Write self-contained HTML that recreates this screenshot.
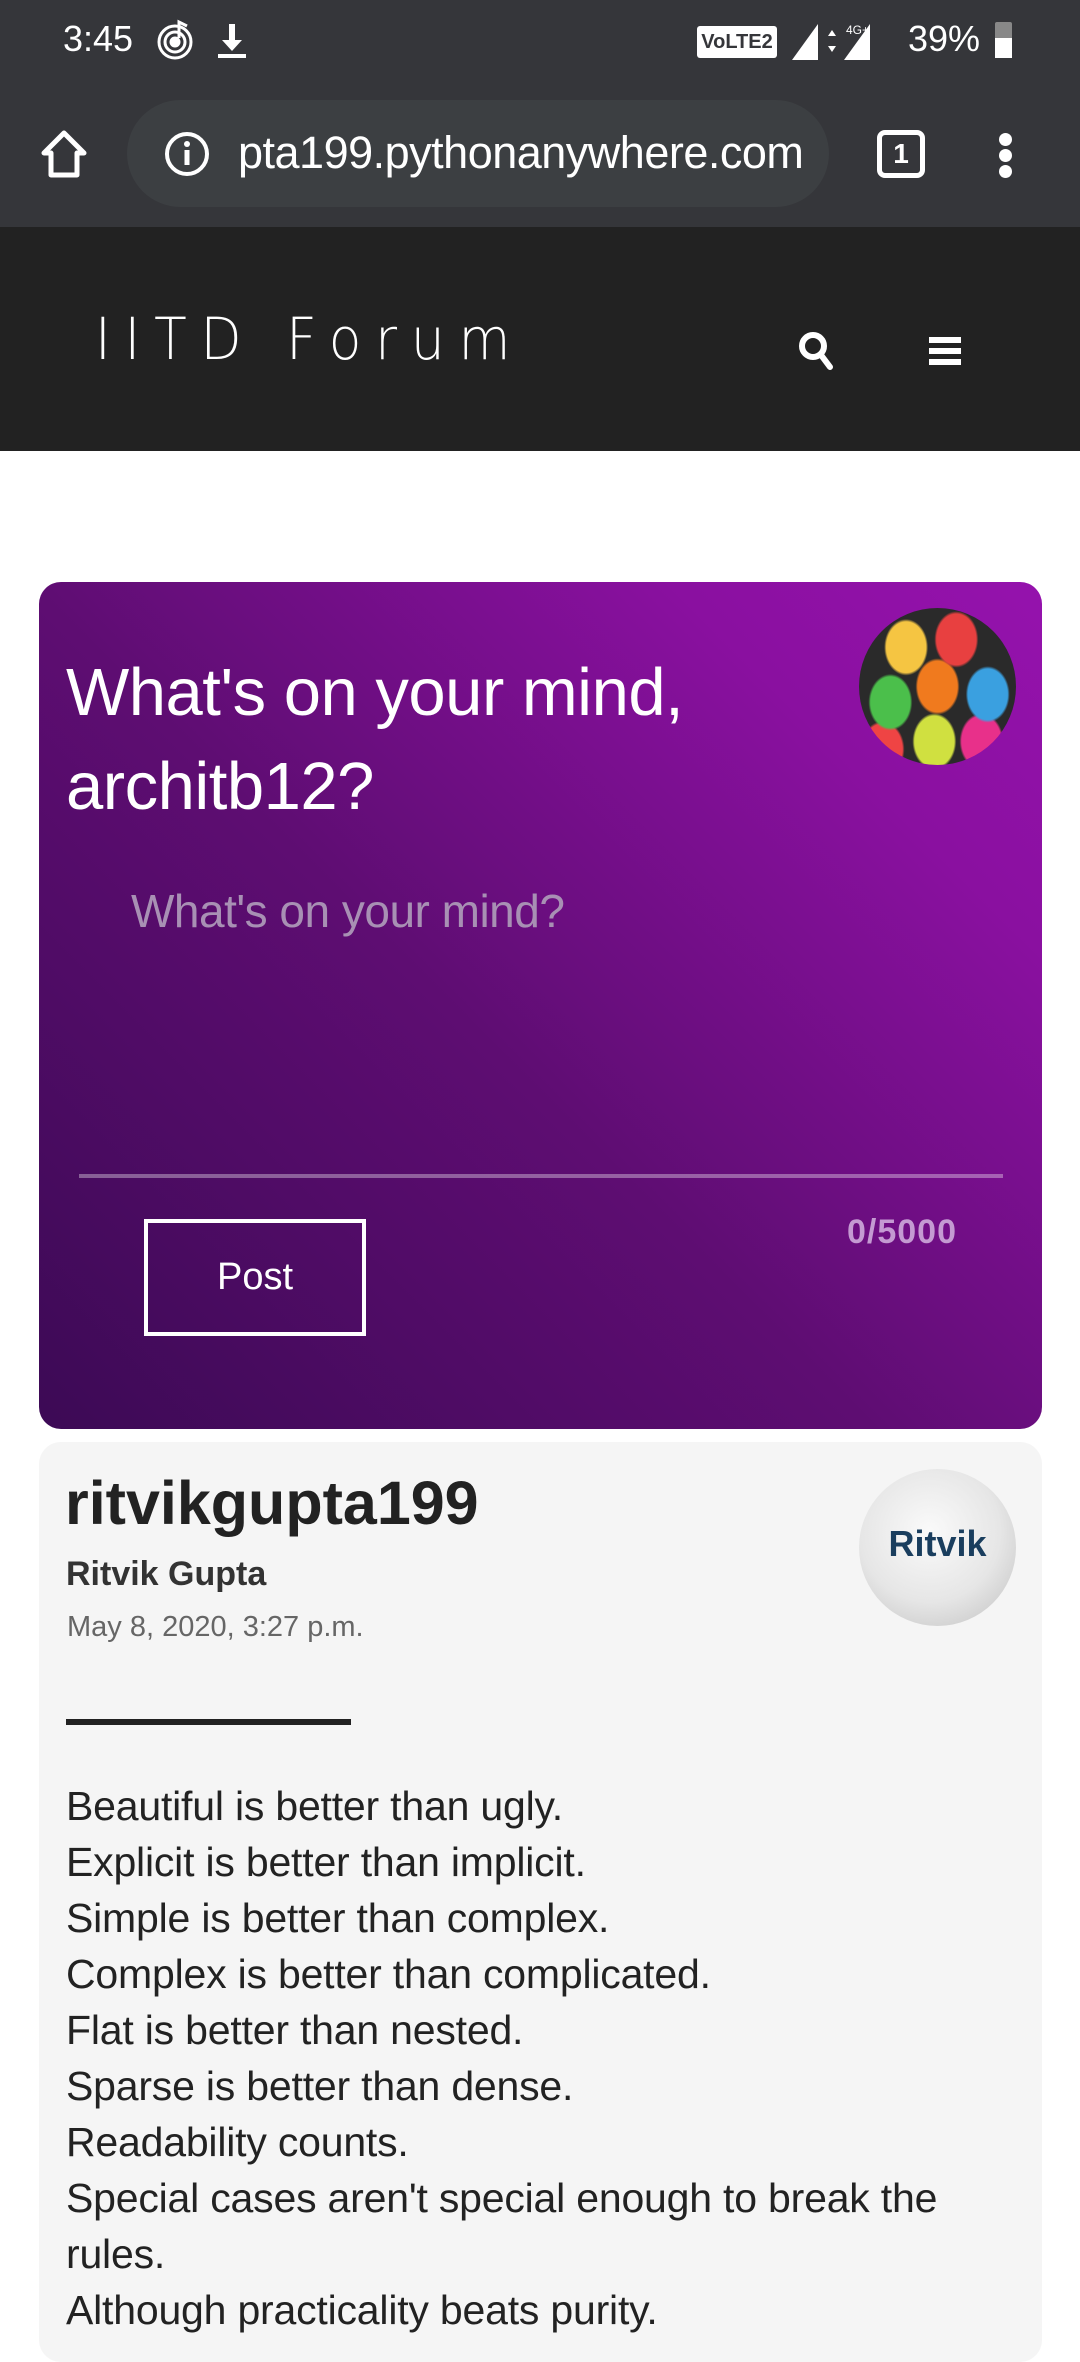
<!DOCTYPE html>
<html><head><meta charset="utf-8"><style>
*{margin:0;padding:0;box-sizing:border-box}
body{width:1080px;height:2340px;overflow:hidden;background:#fff;font-family:"Liberation Sans",sans-serif;position:relative}
.a{position:absolute;white-space:nowrap}
</style></head><body>
<div class="a" style="left:0;top:0;width:1080px;height:227px;background:#35363a"></div>
<div class="a" style="left:63px;top:18px;font-size:36px;color:#fff">3:45</div>
<svg class="a" style="left:155px;top:18px" width="44" height="44" viewBox="0 0 44 44" fill="none" stroke="#fff" stroke-width="3"><circle cx="20" cy="24" r="16"/><circle cx="20" cy="24" r="10"/><circle cx="20" cy="24" r="4" fill="#fff"/><path d="M24 20V4l8 4"/></svg>
<svg class="a" style="left:212px;top:20px" width="40" height="40" viewBox="0 0 40 40" fill="#fff"><path d="M17 4h6v16h7L20 31 10 20h7z"/><rect x="6" y="34" width="28" height="4"/></svg>
<div class="a" style="left:697px;top:26px;width:80px;height:32px;background:#fff;border-radius:3px;color:#35363a;font-size:20px;font-weight:bold;text-align:center;line-height:32px">VoLTE2</div>
<svg class="a" style="left:790px;top:22px" width="100" height="40" viewBox="0 0 100 40" fill="#fff"><path d="M2 38L28 2v36z"/><path d="M54 38L80 2v36z"/><path d="M42 8l4 6h-8zM42 30l4-6h-8z"/><text x="56" y="12" font-size="12" font-family="Liberation Sans">4G+</text></svg>
<div class="a" style="left:908px;top:18px;font-size:36px;color:#fff">39%</div>
<div class="a" style="left:995px;top:22px;width:17px;height:36px;background:#888;border-radius:2px"></div>
<div class="a" style="left:995px;top:38px;width:17px;height:20px;background:#fff"></div>
<svg class="a" style="left:38px;top:128px" width="52" height="52" viewBox="0 0 52 52" fill="none" stroke="#fff" stroke-width="5"><path d="M26 5L6 25h7v22h26V25h7z" stroke-linejoin="round"/></svg>
<div class="a" style="left:127px;top:100px;width:702px;height:107px;background:#3c3f42;border-radius:54px"></div>
<svg class="a" style="left:164px;top:131px" width="46" height="46" viewBox="0 0 46 46"><circle cx="23" cy="23" r="20" fill="none" stroke="#fff" stroke-width="4"/><rect x="20.5" y="19" width="5" height="15" fill="#fff"/><circle cx="23" cy="13" r="3" fill="#fff"/></svg>
<div class="a" style="left:238px;top:127px;font-size:45px;color:#fff;letter-spacing:-0.5px">pta199.pythonanywhere.com</div>
<div class="a" style="left:877px;top:130px;width:48px;height:48px;border:5px solid #fff;border-radius:8px;color:#fff;font-size:28px;font-weight:bold;text-align:center;line-height:38px">1</div>
<div class="a" style="left:999px;top:133px;width:13px;height:13px;border-radius:50%;background:#fff"></div>
<div class="a" style="left:999px;top:149px;width:13px;height:13px;border-radius:50%;background:#fff"></div>
<div class="a" style="left:999px;top:165px;width:13px;height:13px;border-radius:50%;background:#fff"></div>
<div class="a" style="left:0;top:227px;width:1080px;height:224px;background:#222"></div>
<div class="a" style="left:95px;top:305px;font-size:58px;color:#fff;letter-spacing:15px;font-family:'DejaVu Sans','Liberation Sans',sans-serif;font-weight:200;transform:scaleX(0.92);transform-origin:left">IITD Forum</div>
<svg class="a" style="left:796px;top:329px" width="40" height="42" viewBox="0 0 40 42" fill="none" stroke="#fff" stroke-width="6"><circle cx="17" cy="17" r="11"/><path d="M25 26l9 12" stroke-linecap="round"/></svg>
<div class="a" style="left:929px;top:337px;width:32px;height:6px;background:#fff"></div>
<div class="a" style="left:929px;top:348px;width:32px;height:6px;background:#fff"></div>
<div class="a" style="left:929px;top:359px;width:32px;height:6px;background:#fff"></div>

<div class="a" style="left:39px;top:582px;width:1003px;height:847px;border-radius:22px;background:linear-gradient(45deg,#3c0a55 0%,#5e0d72 45%,#8a10a0 80%,#9512ad 100%)"></div>
<div class="a" style="left:66px;top:646px;font-size:67px;color:#fff;line-height:94px;letter-spacing:-0.5px">What's on your mind,<br>architb12?</div>
<div class="a" style="left:859px;top:608px;width:157px;height:157px;border-radius:50%;overflow:hidden;background:radial-gradient(ellipse 14% 18% at 30% 25%,#f5c542 90%,transparent 100%),radial-gradient(ellipse 14% 18% at 62% 20%,#e84040 90%,transparent 100%),radial-gradient(ellipse 14% 18% at 20% 60%,#4bbf4b 90%,transparent 100%),radial-gradient(ellipse 14% 18% at 50% 50%,#f07a1e 90%,transparent 100%),radial-gradient(ellipse 14% 18% at 82% 55%,#3aa0e0 90%,transparent 100%),radial-gradient(ellipse 14% 18% at 48% 85%,#d0e040 90%,transparent 100%),radial-gradient(ellipse 14% 18% at 78% 85%,#e8308a 90%,transparent 100%),radial-gradient(ellipse 14% 18% at 15% 90%,#ef4444 90%,transparent 100%),#2a2a2a"></div>
<div class="a" style="left:131px;top:884px;font-size:46px;color:#a890b4;letter-spacing:-0.5px">What's on your mind?</div>
<div class="a" style="left:79px;top:1174px;width:924px;height:4px;background:rgba(255,255,255,0.35)"></div>
<div class="a" style="left:144px;top:1219px;width:222px;height:117px;border:4px solid #fff;color:#fff;font-size:38px;text-align:center;line-height:109px">Post</div>
<div class="a" style="left:847px;top:1213px;font-size:34px;color:#c49ad2;font-weight:bold;letter-spacing:1px">0/5000</div>

<div class="a" style="left:39px;top:1442px;width:1003px;height:920px;border-radius:22px;background:#f5f5f5"></div>
<div class="a" style="left:65px;top:1468px;font-size:61px;font-weight:bold;color:#222">ritvikgupta199</div>
<div class="a" style="left:66px;top:1555px;font-size:34px;font-weight:bold;color:#333">Ritvik Gupta</div>
<div class="a" style="left:67px;top:1611px;font-size:29px;color:#666">May 8, 2020, 3:27 p.m.</div>
<div class="a" style="left:859px;top:1469px;width:157px;height:157px;border-radius:50%;background:radial-gradient(circle at 45% 40%,#fafafa 0%,#e6e6e6 55%,#bdbdbd 100%);color:#1a3e5e;font-size:36px;font-weight:bold;text-align:center;line-height:150px">Ritvik</div>
<div class="a" style="left:66px;top:1719px;width:285px;height:6px;background:#222"></div>
<div class="a" style="left:66px;top:1778px;font-size:41px;line-height:56px;color:#222;letter-spacing:-0.2px">Beautiful is better than ugly.<br>Explicit is better than implicit.<br>Simple is better than complex.<br>Complex is better than complicated.<br>Flat is better than nested.<br>Sparse is better than dense.<br>Readability counts.<br>Special cases aren't special enough to break the<br>rules.<br>Although practicality beats purity.</div>
</body></html>
